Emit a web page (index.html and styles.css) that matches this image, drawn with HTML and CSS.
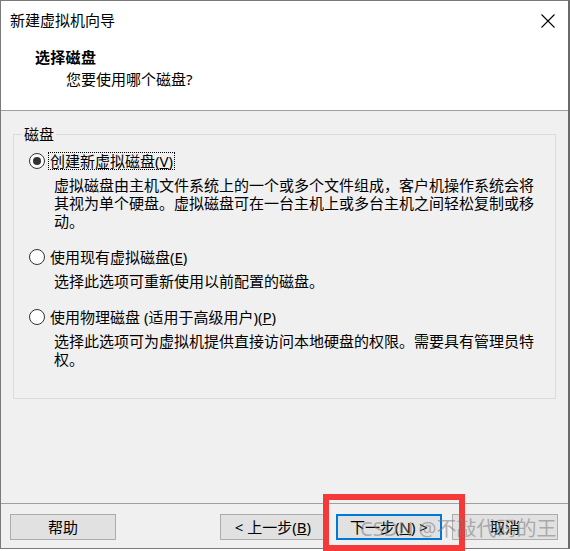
FILE: index.html
```html
<!DOCTYPE html>
<html lang="zh-CN">
<head>
<meta charset="utf-8">
<title>新建虚拟机向导</title>
<link rel="stylesheet" href="styles.css">
</head>
<body>
<div class="window">
  <div class="titlebar">
    <span class="title">新建虚拟机向导</span>
    <svg class="close" width="16" height="16" viewBox="0 0 16 16"><path d="M1.5 1.5 L14.5 14.5 M14.5 1.5 L1.5 14.5" stroke="#000" stroke-width="1.1" fill="none"/></svg>
  </div>
  <div class="header">
    <div class="h-title">选择磁盘</div>
    <div class="h-sub">您要使用哪个磁盘?</div>
  </div>
  <div class="content">
    <div class="group">
      <span class="group-title">磁盘</span>
      <div class="option">
        <span class="radio checked"></span>
        <span class="label focus">创建新虚拟磁盘(<u>V</u>)</span>
      </div>
      <div class="desc">虚拟磁盘由主机文件系统上的一个或多个文件组成，客户机操作系统会将<br>其视为单个硬盘。虚拟磁盘可在一台主机上或多台主机之间轻松复制或移<br>动。</div>
      <div class="option">
        <span class="radio"></span>
        <span class="label">使用现有虚拟磁盘(<u>E</u>)</span>
      </div>
      <div class="desc">选择此选项可重新使用以前配置的磁盘。</div>
      <div class="option">
        <span class="radio"></span>
        <span class="label">使用物理磁盘 (适用于高级用户)(<u>P</u>)</span>
      </div>
      <div class="desc">选择此选项可为虚拟机提供直接访问本地硬盘的权限。需要具有管理员特<br>权。</div>
    </div>
  </div>
  <div class="footer">
    <button class="btn">帮助</button>
    <div class="btn-group">
      <button class="btn">&lt; 上一步(<u>B</u>)</button>
      <button class="btn default">下一步(<u>N</u>) &gt;</button>
      <button class="btn">取消</button>
    </div>
  </div>
</div>
<div class="annot"></div>
<div class="watermark">CSDN @不敲代码的王</div>
</body>
</html>
```
FILE: styles.css
```css
html, body {
  margin: 0;
  padding: 0;
  background: #ffffff;
}
body {
  position: relative;
  height: 551px;
  overflow: hidden;
  font-family: "Noto Sans", "Noto Sans CJK SC", sans-serif;
  font-size: 15px;
  color: #000;
}
.window {
  width: 570px;
  height: 549px;
  box-sizing: border-box;
  border: 1px solid #7a7a7a;
  border-right: 2px solid #6a6a6a;
  background: #f0f0f0;
  display: flex;
  flex-direction: column;
  overflow: hidden;
}
.titlebar {
  height: 38px;
  flex: none;
  background: #fff;
  display: flex;
  align-items: center;
  justify-content: space-between;
  padding: 0 12px 0 9px;
  line-height: 38px;
}
.title {
  font-size: 15px;
}
.close {
  display: block;
  margin-top: 1px;
}
.header {
  height: 72px;
  flex: none;
  box-sizing: border-box;
  background: #fff;
  border-bottom: 1px solid #a0a0a0;
  padding-top: 9px;
}
.h-title {
  font-weight: bold;
  line-height: 18px;
  padding-left: 34px;
  letter-spacing: 0.3px;
}
.h-sub {
  line-height: 18px;
  padding-left: 65px;
  margin-top: 4px;
}
.content {
  flex: 1;
  padding: 23px 12px 0 12px;
}
.group {
  position: relative;
  height: 265px;
  box-sizing: border-box;
  border: 1px solid #dcdcdc;
  padding: 17px 0 0 15px;
}
.group-title {
  position: absolute;
  left: 8px;
  top: -10px;
  padding: 0 2px;
  line-height: 18px;
  background: #f0f0f0;
}
.option {
  display: flex;
  align-items: center;
  height: 18px;
}
.desc + .option {
  margin-top: 18px;
}
.radio {
  width: 16px;
  height: 16px;
  box-sizing: border-box;
  border: 1px solid #333;
  border-radius: 50%;
  background: #fff;
  flex: none;
  display: flex;
  align-items: center;
  justify-content: center;
}
.radio.checked::after {
  content: "";
  width: 8px;
  height: 8px;
  border-radius: 50%;
  background: #333;
}
.label {
  margin-left: 3px;
  border: 1px dotted transparent;
  padding: 0 1px;
  line-height: 16px;
  white-space: nowrap;
}
.label.focus {
  border-color: #000;
}
.desc {
  margin-top: 6px;
  padding-left: 25px;
  line-height: 18px;
  white-space: nowrap;
}
.footer {
  flex: none;
  height: 45px;
  box-sizing: border-box;
  border-top: 1px solid #a0a0a0;
  padding: 10px 10px 0 9px;
  display: flex;
  align-items: flex-start;
}
.btn-group {
  margin-left: auto;
  display: flex;
  gap: 10px;
}
.btn {
  width: 106px;
  height: 26px;
  box-sizing: border-box;
  border: 1px solid #adadad;
  background: #e1e1e1;
  font-family: "Noto Sans", "Noto Sans CJK SC", sans-serif;
  font-size: 15px;
  line-height: 22px;
  padding: 0;
  color: #000;
}
.btn.default {
  border: 2px solid #0078d7;
}
.annot {
  position: absolute;
  left: 323px;
  top: 494px;
  width: 142px;
  height: 57px;
  box-sizing: border-box;
  border: 6px solid #f53838;
}
.watermark {
  position: absolute;
  left: 360px;
  top: 516px;
  font-size: 20px;
  line-height: 26px;
  color: rgba(120, 120, 120, 0.55);
  white-space: nowrap;
}
```
